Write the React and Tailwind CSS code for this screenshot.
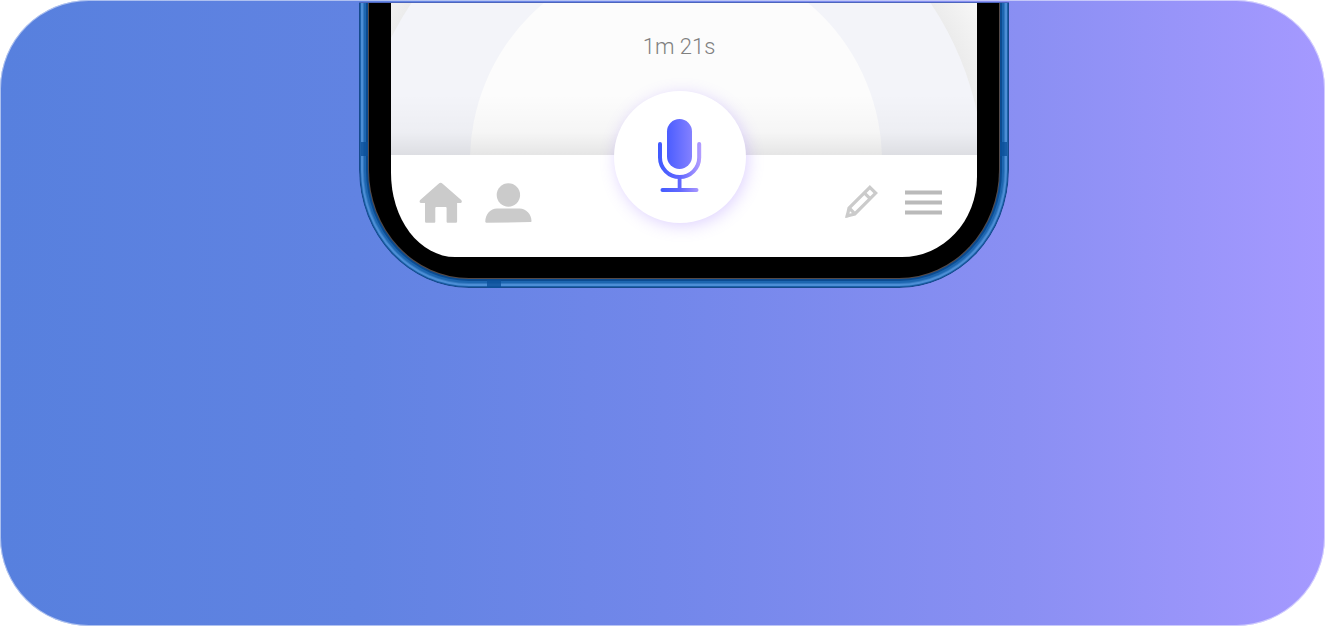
function HomeIcon() {
  return (
    <svg width="43" height="42" viewBox="0 0 43 42" fill="#cbcbcb" aria-hidden="true">
      <path d="M19.6 1.7a2.8 2.8 0 0 1 4 0L42.2 18c.9.9.9 3-.6 3h-3.500v18.500a1.300 1.300 0 0 1-1.300 1.300h-8.200a1 1 0 0 1-1-1V26a1 1 0 0 0-1-1H17.300a1 1 0 0 0-1 1v13.800a1 1 0 0 1-1 1H7.300A1.300 1.300 0 0 1 6 39.500V21H1.900C.3 21 .3 18.900 1.200 18z" />
    </svg>
  );
}

function UserIcon() {
  return (
    <svg width="47" height="42" viewBox="0 0 47 42" fill="#cbcbcb" aria-hidden="true">
      <circle cx="23.400" cy="13" r="11.700" />
      <path d="M.3 39.500C.3 32 5.500 26.600 12 26.400h22.500c6.500 0 12 5.600 12 12.600 0 .8-.3 1.100-1 1.100L1.300 40.700c-.7 0-1-.4-1-1.200z" />
    </svg>
  );
}

function PencilIcon() {
  return (
    <svg width="33" height="34" viewBox="0 0 33 34" fill="none" stroke="#cbcbcb" strokeWidth="3.200" aria-hidden="true">
      <path d="M24.900 2.300 30.700 8.100 9.800 29 2.300 30.800 4 23.100z" />
      <path d="M19.300 7.900 25.100 13.700M4.600 23.400 9.700 28.700" />
      <path d="M1 28.200 5 31.700 0.500 32.700z" fill="#cbcbcb" stroke="none" />
    </svg>
  );
}

function MenuIcon() {
  return (
    <svg width="37" height="26" viewBox="0 0 37 26" fill="#bababa" aria-hidden="true">
      <path d="M0 1.500h37v4H0zM0 11.500h37v4H0zM0 21.500h37v4H0z" />
    </svg>
  );
}

function MicIcon() {
  return (
    <svg width="44" height="74" viewBox="0 0 44 74" fill="none" aria-hidden="true">
      <defs>
        <linearGradient id="capsule" x1="9" x2="35" y1="0" y2="0" gradientUnits="userSpaceOnUse">
          <stop stopColor="#4b5dff" />
          <stop offset="1" stopColor="#8682ff" />
        </linearGradient>
        <linearGradient id="stand" x1="0" x2="44" y1="0" y2="0" gradientUnits="userSpaceOnUse">
          <stop stopColor="#405aff" />
          <stop offset="0.500" stopColor="#6168ff" />
          <stop offset="1" stopColor="#b7a0ff" />
        </linearGradient>
      </defs>
      <rect x="9" y="1" width="25" height="50" rx="12.500" fill="url(#capsule)" />
      <path d="M2 26v13.500a19.600 19.600 0 0 0 39.200 0V26" stroke="url(#stand)" strokeWidth="4" strokeLinecap="round" />
      <path d="M19.700 58h3.800v12h-3.800z" fill="url(#stand)" />
      <rect x="2.500" y="70" width="38" height="4" rx="2" fill="url(#stand)" />
    </svg>
  );
}

function RecordingArea() {
  return (
    <section className="relative h-[152px] overflow-hidden bg-[#f5f5f4]">
      <svg className="absolute top-0 left-0" width="587" height="152" viewBox="0 0 587 152" aria-hidden="true">
        <defs>
          <radialGradient id="halo" cx="280" cy="176" r="370" gradientUnits="userSpaceOnUse">
            <stop offset="0.840" stopColor="#ebebeb" />
            <stop offset="1" stopColor="#fcfcfc" />
          </radialGradient>
          <linearGradient id="shade" x1="0" x2="0" y1="0" y2="1">
            <stop offset="0.600" stopColor="#000" stopOpacity="0" />
            <stop offset="0.850" stopColor="#000" stopOpacity="0.025" />
            <stop offset="1" stopColor="#000" stopOpacity="0.090" />
          </linearGradient>
        </defs>
        <rect width="587" height="152" fill="url(#halo)" />
        <circle cx="280" cy="175" r="313" fill="#f3f4f9" />
        <circle cx="285" cy="158" r="206" fill="#fcfcfc" />
        <rect width="587" height="152" fill="url(#shade)" />
      </svg>
      <time className="relative block pt-[31px] pr-[10px] text-center font-['Roboto',sans-serif] text-[22px] leading-[26px] font-light text-[#808080]">
        1m 21s
      </time>
    </section>
  );
}

function TabBar() {
  return (
    <nav className="relative flex h-[102px] items-start bg-white pr-[35px] pl-[28px]">
      <div className="flex gap-[23px] pt-[27px]">
        <button type="button" aria-label="Home"><HomeIcon /></button>
        <button type="button" aria-label="Profile"><UserIcon /></button>
      </div>
      <button
        type="button"
        aria-label="Record"
        className="-mt-16 ml-[82px] flex size-[132px] shrink-0 items-center justify-center rounded-full bg-white pb-1 shadow-[2px_3px_16px_rgba(150,110,255,0.3)]"
      >
        <MicIcon />
      </button>
      <div className="ml-auto flex items-center gap-[27px] pt-[30px]">
        <button type="button" aria-label="Edit"><PencilIcon /></button>
        <button type="button" aria-label="Menu"><MenuIcon /></button>
      </div>
    </nav>
  );
}

function Phone() {
  return (
    <div className="relative ml-[27.1%] w-full max-w-[650px] overflow-hidden rounded-b-[110px_118px] border-t border-[#4d66bd] px-[10px] pb-[10px]">
      <div className="rounded-b-[100px_108px] bg-black px-[22px] pb-[21px] shadow-[0_0_0_1px_#554a48,0_0_0_3px_#0b4b90,0_0_0_5px_#1d66b0,0_0_0_6px_#3478bf,0_0_0_8px_#4c8ed6,0_0_0_9px_#1d62aa,0_0_0_10px_#164a8c]">
        <div className="overflow-hidden rounded-br-[75px_80px] rounded-bl-[64px_84px]">
          <RecordingArea />
          <TabBar />
        </div>
      </div>
      <span className="absolute top-[139px] left-[2px] h-[14px] w-[7px] bg-[#0b509a]/80" />
      <span className="absolute top-[139px] right-[2px] h-[14px] w-[7px] bg-[#0b509a]/80" />
      <span className="absolute bottom-0 left-[128px] h-[8px] w-[14px] bg-[#0b509a]/80" />
    </div>
  );
}

export default function App() {
  return (
    <div className="min-h-screen bg-white">
      <main className="min-h-screen overflow-hidden rounded-[89px] bg-[linear-gradient(90deg,#5780de_0%,#6183e2_27%,#7287ea_50%,#8a8ff3_77%,#a599ff_100%)] pt-[2px] shadow-[inset_0_0_0_1px_rgba(255,255,255,0.5)]">
        <Phone />
      </main>
    </div>
  );
}
